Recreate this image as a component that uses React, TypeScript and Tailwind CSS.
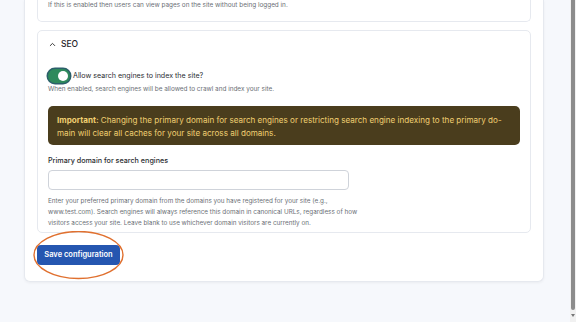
import { ChevronUp } from "lucide-react";

export default function App() {
  return (
    <div
      className="flex h-[322px] w-[576px] overflow-hidden bg-[#f6f8fc] text-[#1f2328]"
      style={{ fontFamily: "Inter, 'Noto Sans', sans-serif" }}
    >
      <div className="flex-1 pl-[24px] pr-[26px]">
        {/* Outer settings card */}
        <div className="rounded-b-[6px] border border-t-0 border-[#e6e9ef] bg-white px-[12px] pb-[16px] shadow-[0_1px_3px_rgba(0,0,0,0.05)]">
          {/* Previous section (cut off at top) */}
          <div className="rounded-b-[5px] border border-t-0 border-[#e6e9ef] px-[10px] pb-[11px] pt-[0px]">
            <p className="text-[6.4px] leading-[10px] text-[#6b6f76]">
              If this is enabled then users can view pages on the site without being logged in.
            </p>
          </div>

          {/* SEO section */}
          <div className="mt-[8px] rounded-[5px] border border-[#e6e9ef] px-[10px] pb-[3px]">
            <div className="flex h-[26px] items-center gap-[4px]">
              <ChevronUp className="h-[9px] w-[9px] text-[#333]" strokeWidth={2.5} />
              <span className="text-[8.5px] font-medium">SEO</span>
            </div>

            <div className="mt-[12px] flex h-[14px] items-center gap-[3px]">
              <div className="flex h-[14px] w-[22px] items-center justify-end rounded-full bg-[#2e8a5c] pr-[2px] ring-[1.5px] ring-[#2b5f6a]">
                <div className="h-[10px] w-[10px] rounded-full bg-white" />
              </div>
              <span className="text-[7.1px] leading-[14px] text-[#2a2d31]">
                Allow search engines to index the site?
              </span>
            </div>
            <p className="mt-[1px] text-[6.4px] leading-[11px] text-[#6b6f76]">
              When enabled, search engines will be allowed to crawl and index your site.
            </p>

            <div className="mt-[11px] h-[39px] rounded-[5px] bg-[#4a3d1d] px-[9px] pt-[8px] text-[8.1px] leading-[12.5px] text-[#f0cf72]">
              <span className="font-bold">Important:</span> Changing the primary domain for search
              engines or restricting search engine indexing to the primary do-
              <br />
              main will clear all caches for your site across all domains.
            </div>

            <label className="mt-[10px] block text-[7.2px] font-medium leading-[12px] text-[#2a2d31]">
              Primary domain for search engines
            </label>
            <input
              type="text"
              className="mt-[3px] block h-[20px] w-[301px] rounded-[4px] border border-[#cfd3da] bg-white"
            />
            <p className="mt-[6px] w-[324px] text-[6.35px] leading-[11px] text-[#6b6f76]">
              Enter your preferred primary domain from the domains you have registered for your site
              (e.g., www.test.com). Search engines will always reference this domain in canonical
              URLs, regardless of how visitors access your site. Leave blank to use whichever domain
              visitors are currently on.
            </p>
          </div>

          <div className="relative mt-[12px] flex w-fit">
            <button className="h-[20px] w-[83px] rounded-[4px] bg-[#2556b0] text-[7.5px] font-semibold text-white">
              Save configuration
            </button>
            <svg
              className="pointer-events-none absolute left-[-4px] top-[-14px]"
              width="92"
              height="50"
              viewBox="0 0 92 50"
            >
              <ellipse cx="45.5" cy="24" rx="44.5" ry="23.5" fill="none" stroke="#e0702f" strokeWidth="1.4" />
            </svg>
          </div>
        </div>
      </div>

      {/* Scrollbar */}
      <div className="flex w-[6px] flex-col items-center bg-[#f1f1f1]">
        <div className="mt-0 h-[310px] w-[4px] rounded-b-[2px] bg-[#8c8c8c]" />
        <div className="mt-[4px] h-0 w-0 border-l-[2.5px] border-r-[2.5px] border-t-[3px] border-l-transparent border-r-transparent border-t-[#777]" />
      </div>
    </div>
  );
}
